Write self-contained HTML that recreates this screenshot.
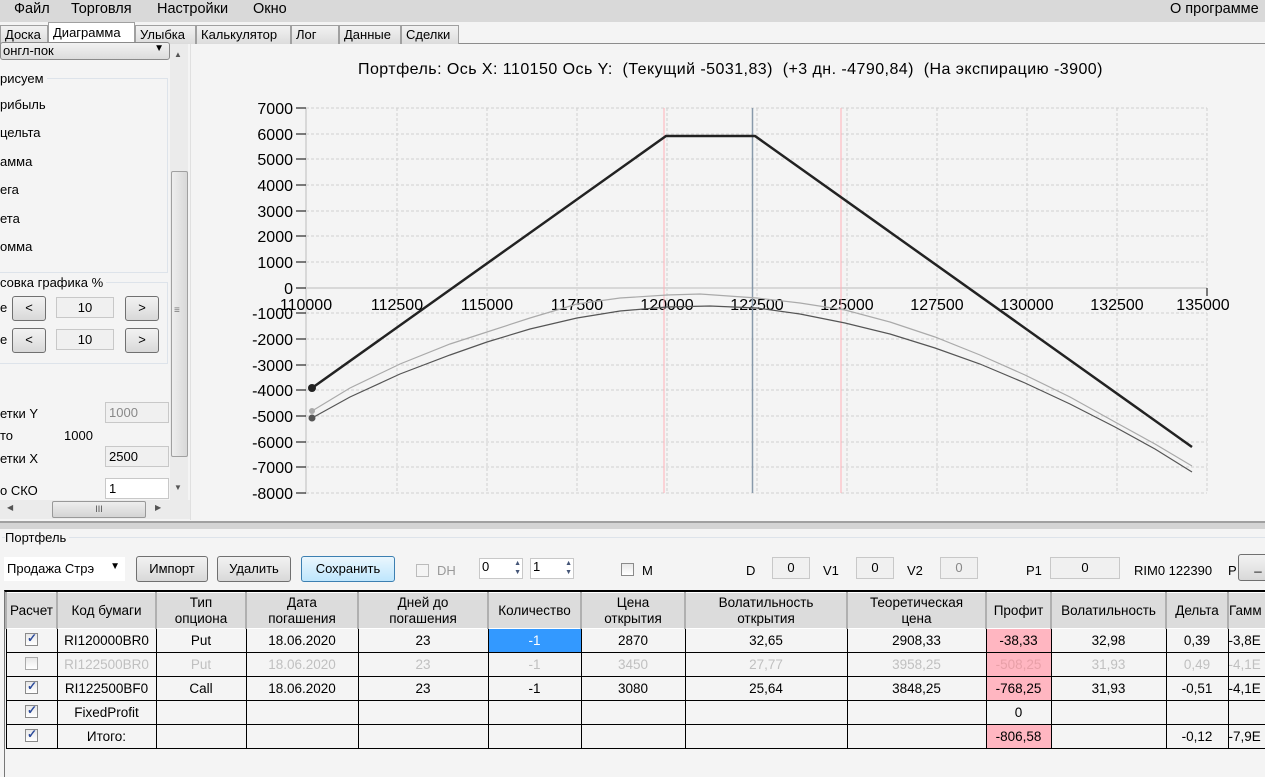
<!DOCTYPE html>
<html><head><meta charset="utf-8">
<style>
*{box-sizing:border-box;margin:0;padding:0}
body{width:1265px;height:777px;overflow:hidden;background:#f4f4f4;font-family:"Liberation Sans",sans-serif;font-size:13px;color:#000;position:relative}
.a{position:absolute;white-space:nowrap}
.menu{left:0;top:0;width:1265px;height:22px;background:#d9d9d9;font-size:14.5px}
.tab{position:absolute;top:25px;height:19px;border:1px solid #a0a0a0;border-bottom:none;background:linear-gradient(#f2f2f2,#dcdcdc);font-size:13px;padding:1px 0 0 4px}
.btn{position:absolute;border:1px solid #707070;border-radius:3px;background:linear-gradient(#f2f2f2,#e6e6e6 50%,#d8d8d8);text-align:center;font-size:13px}
.inp{position:absolute;border:1px solid #c8c8c8;background:#f0f0f0;text-align:center;font-size:13px}
.cb{position:absolute;width:13px;height:13px;border:1px solid #8a8a8a;background:linear-gradient(#e8e8e8,#fff)}
.cb.k::after{content:"✓";position:absolute;left:1px;top:-3px;font-size:12px;color:#2b4a9a;font-weight:bold}
table{border-collapse:collapse;position:absolute;left:5px;top:592px;table-layout:fixed;width:1282px}
td{border:1.5px solid #000;text-align:center;font-size:13.5px;height:24px;overflow:hidden;white-space:nowrap;padding:0}
tr.h td{background:#dcdcdc;height:36px;border-color:#fff #b0b0b0;border-width:1px 2px;line-height:16px}
tr.g td{color:#c0c0c0}
.pk{background:#ffb6c1}
</style></head><body>
<div class="a menu">
<span class="a" style="left:14px;top:1px">Файл</span>
<span class="a" style="left:71px;top:1px">Торговля</span>
<span class="a" style="left:157px;top:1px">Настройки</span>
<span class="a" style="left:253px;top:1px">Окно</span>
<span class="a" style="left:1170px;top:1px">О программе</span>
</div>
<div class="a" style="left:0;top:43px;width:1265px;height:1px;background:#8c8c8c"></div>
<div class="tab" style="left:0;width:48px">Доска</div>
<div class="tab" style="left:48px;top:22px;height:23px;width:87px;background:#fff;padding-top:2px">Диаграмма</div>
<div class="tab" style="left:135px;width:61px">Улыбка</div>
<div class="tab" style="left:196px;width:95px">Калькулятор</div>
<div class="tab" style="left:291px;width:48px">Лог</div>
<div class="tab" style="left:339px;width:62px">Данные</div>
<div class="tab" style="left:401px;width:58px">Сделки</div>

<!-- left panel -->
<div class="a" style="left:0;top:42px;width:170px;height:18px;border:1px solid #8a8a8a;border-radius:3px;background:linear-gradient(#f2f2f2,#dcdcdc);font-size:13px;padding-left:2px">онгл-пок<span style="position:absolute;right:5px;top:0;font-size:10px">▼</span></div>
<div class="a" style="left:0;top:78px;width:168px;height:195px;border-top:1px solid #dde3ea;border-right:1px solid #dde3ea;border-bottom:1px solid #dde3ea"></div>
<span class="a" style="left:0;top:71px;background:#f4f4f4;padding-right:3px">рисуем</span>
<span class="a" style="left:0;top:97px">рибыль</span>
<span class="a" style="left:0;top:125px">цельта</span>
<span class="a" style="left:0;top:154px">амма</span>
<span class="a" style="left:0;top:182px">ега</span>
<span class="a" style="left:0;top:211px">ета</span>
<span class="a" style="left:0;top:239px">омма</span>
<div class="a" style="left:0;top:282px;width:168px;height:82px;border:1px solid #dde3ea;border-left:none"></div>
<span class="a" style="left:0;top:275px;background:#f4f4f4;padding-right:3px">совка графика %</span>
<span class="a" style="left:0;top:300px">е</span>
<div class="btn" style="left:12px;top:296px;width:34px;height:25px;line-height:22px">&lt;</div>
<div class="inp" style="left:56px;top:297px;width:58px;height:21px;line-height:19px">10</div>
<div class="btn" style="left:125px;top:296px;width:34px;height:25px;line-height:22px">&gt;</div>
<span class="a" style="left:0;top:332px">е</span>
<div class="btn" style="left:12px;top:328px;width:34px;height:25px;line-height:22px">&lt;</div>
<div class="inp" style="left:56px;top:329px;width:58px;height:21px;line-height:19px">10</div>
<div class="btn" style="left:125px;top:328px;width:34px;height:25px;line-height:22px">&gt;</div>
<span class="a" style="left:0;top:406px">етки Y</span>
<div class="inp" style="left:105px;top:402px;width:64px;height:21px;text-align:left;padding-left:3px;color:#888;line-height:19px">1000</div>
<span class="a" style="left:0;top:428px">то</span>
<span class="a" style="left:64px;top:428px">1000</span>
<span class="a" style="left:0;top:451px">етки X</span>
<div class="inp" style="left:105px;top:446px;width:64px;height:21px;text-align:left;padding-left:3px;line-height:19px">2500</div>
<span class="a" style="left:0;top:483px">о СКО</span>
<div class="inp" style="left:105px;top:478px;width:64px;height:21px;background:#fff;text-align:left;padding-left:3px;line-height:19px">1</div>
<!-- v scrollbar -->
<div class="a" style="left:170px;top:44px;width:18px;height:456px;background:#ebebeb"></div>
<span class="a" style="left:174px;top:50px;font-size:8px;color:#555">▲</span>
<div class="a" style="left:171px;top:171px;width:17px;height:286px;border:1px solid #a0a0a0;border-radius:2px;background:linear-gradient(90deg,#eee,#d8d8d8)"></div>
<span class="a" style="left:174px;top:305px;font-size:10px;color:#777">≡</span>
<span class="a" style="left:174px;top:483px;font-size:8px;color:#555">▼</span>
<div class="a" style="left:0;top:500px;width:190px;height:19px;background:#ebebeb"></div>
<span class="a" style="left:7px;top:503px;font-size:8px;color:#555">◀</span>
<div class="a" style="left:52px;top:501px;width:94px;height:17px;border:1px solid #999;border-radius:2px;background:linear-gradient(#eee,#d4d4d4);text-align:center;font-size:9px;color:#555;line-height:15px">III</div>
<span class="a" style="left:155px;top:503px;font-size:8px;color:#555">▶</span>
<div class="a" style="left:190px;top:44px;width:1px;height:476px;background:#e0e0e0"></div>

<!-- chart -->
<div class="a" style="left:358px;top:61px;font-size:16px;letter-spacing:0.45px">Портфель: Ось X: 110150 Ось Y:&nbsp; (Текущий -5031,83)&nbsp; (+3 дн. -4790,84)&nbsp; (На экспирацию -3900)</div>
<svg class="a" style="left:0;top:0" width="1265" height="520" font-family="Liberation Sans, sans-serif" font-size="16">
<g stroke="#d0d0d0" stroke-dasharray="3,2" stroke-width="1">
<line x1="306" y1="108" x2="1207" y2="108"/><line x1="306" y1="134" x2="1207" y2="134"/><line x1="306" y1="159" x2="1207" y2="159"/><line x1="306" y1="185" x2="1207" y2="185"/><line x1="306" y1="211" x2="1207" y2="211"/><line x1="306" y1="236" x2="1207" y2="236"/><line x1="306" y1="262" x2="1207" y2="262"/><line x1="306" y1="313" x2="1207" y2="313"/><line x1="306" y1="339" x2="1207" y2="339"/><line x1="306" y1="365" x2="1207" y2="365"/><line x1="306" y1="390" x2="1207" y2="390"/><line x1="306" y1="416" x2="1207" y2="416"/><line x1="306" y1="442" x2="1207" y2="442"/><line x1="306" y1="467" x2="1207" y2="467"/><line x1="306" y1="493" x2="1207" y2="493"/>
<line x1="397" y1="108" x2="397" y2="493"/><line x1="487" y1="108" x2="487" y2="493"/><line x1="577" y1="108" x2="577" y2="493"/><line x1="667" y1="108" x2="667" y2="493"/><line x1="757" y1="108" x2="757" y2="493"/><line x1="847" y1="108" x2="847" y2="493"/><line x1="937" y1="108" x2="937" y2="493"/><line x1="1027" y1="108" x2="1027" y2="493"/><line x1="1117" y1="108" x2="1117" y2="493"/><line x1="1207" y1="108" x2="1207" y2="493"/>
</g>
<line x1="306" y1="108" x2="306" y2="494" stroke="#d8d8d8" stroke-width="2"/>
<line x1="306" y1="288" x2="1207" y2="288" stroke="#d8d8d8" stroke-width="2"/>
<g stroke="#000" stroke-width="1">
<line x1="296" y1="108" x2="306" y2="108"/><line x1="296" y1="134" x2="306" y2="134"/><line x1="296" y1="159" x2="306" y2="159"/><line x1="296" y1="185" x2="306" y2="185"/><line x1="296" y1="211" x2="306" y2="211"/><line x1="296" y1="236" x2="306" y2="236"/><line x1="296" y1="262" x2="306" y2="262"/><line x1="296" y1="288" x2="306" y2="288"/><line x1="296" y1="313" x2="306" y2="313"/><line x1="296" y1="339" x2="306" y2="339"/><line x1="296" y1="365" x2="306" y2="365"/><line x1="296" y1="390" x2="306" y2="390"/><line x1="296" y1="416" x2="306" y2="416"/><line x1="296" y1="442" x2="306" y2="442"/><line x1="296" y1="467" x2="306" y2="467"/><line x1="296" y1="493" x2="306" y2="493"/>
<line x1="1207" y1="288" x2="1207" y2="296"/>
</g>
<g text-anchor="end">
<text x="293" y="114">7000</text><text x="293" y="140">6000</text><text x="293" y="165">5000</text><text x="293" y="191">4000</text><text x="293" y="217">3000</text><text x="293" y="242">2000</text><text x="293" y="268">1000</text><text x="293" y="294">0</text><text x="293" y="319">-1000</text><text x="293" y="345">-2000</text><text x="293" y="371">-3000</text><text x="293" y="396">-4000</text><text x="293" y="422">-5000</text><text x="293" y="448">-6000</text><text x="293" y="473">-7000</text><text x="293" y="499">-8000</text>
</g>
<g text-anchor="middle">
<text x="306" y="310">110000</text><text x="397" y="310">112500</text><text x="487" y="310">115000</text><text x="577" y="310">117500</text><text x="667" y="310">120000</text><text x="757" y="310">122500</text><text x="847" y="310">125000</text><text x="937" y="310">127500</text><text x="1027" y="310">130000</text><text x="1117" y="310">132500</text><text x="1203" y="310">135000</text>
</g>
<line x1="664" y1="108" x2="664" y2="493" stroke="#ffb0b8"/>
<line x1="841" y1="108" x2="841" y2="493" stroke="#ffb0b8"/>
<line x1="752.5" y1="108" x2="752.5" y2="493" stroke="#8899aa" stroke-width="1.5"/>
<polyline fill="none" stroke="#aaa" stroke-width="1.2" points="312,411 350,388 400,364 450,344 487,332 530,318 577,304 620,298 667,295 700,294 757,298 800,303 845,310 890,322 935,337 980,355 1025,375 1070,397 1115,422 1155,444 1192,466"/>
<polyline fill="none" stroke="#555" stroke-width="1.2" points="312,418 350,397 400,374 450,355 487,342 530,329 577,318 620,311 667,307 710,306 757,308 800,314 845,323 890,334 935,348 980,364 1025,383 1070,404 1115,427 1155,449 1192,472"/>
<polyline fill="none" stroke="#222" stroke-width="2.5" points="312,388 666,136 755,136 1192,447"/>
<circle cx="312" cy="388" r="4" fill="#222"/>
<circle cx="312" cy="411" r="3" fill="#aaa"/>
<circle cx="312" cy="418" r="3.5" fill="#555"/>
</svg>

<!-- splitter -->
<div class="a" style="left:0;top:521px;width:1265px;height:2px;background:#a0a0a0"></div>
<div class="a" style="left:0;top:523px;width:1265px;height:6px;background:#d4d4d4"></div>

<!-- bottom -->
<div class="a" style="left:2px;top:537px;width:1263px;height:1px;background:#dde3ea"></div>
<span class="a" style="left:5px;top:530px;background:#f4f4f4;padding-right:3px">Портфель</span>
<div class="a" style="left:4px;top:557px;width:121px;height:24px;background:#fff;padding:4px 0 0 3px">Продажа Стрэ<span style="position:absolute;right:5px;top:4px;font-size:10px">▼</span></div>
<div class="btn" style="left:136px;top:556px;width:72px;height:26px;line-height:24px">Импорт</div>
<div class="btn" style="left:217px;top:556px;width:74px;height:26px;line-height:24px">Удалить</div>
<div class="btn" style="left:301px;top:556px;width:94px;height:26px;line-height:24px;border-color:#3c7fb1;background:linear-gradient(#eaf6fd,#bee6fd)">Сохранить</div>
<div class="cb" style="left:416px;top:564px;border-color:#bbb;background:#f4f4f4"></div>
<span class="a" style="left:437px;top:563px;color:#999">DH</span>
<div class="inp" style="left:479px;top:558px;width:44px;height:21px;background:#fff;text-align:left;padding-left:2px">0<span style="position:absolute;right:1px;top:0;font-size:7px;line-height:9px;color:#457">▲<br>▼</span></div>
<div class="inp" style="left:530px;top:558px;width:44px;height:21px;background:#fff;text-align:left;padding-left:2px">1<span style="position:absolute;right:1px;top:0;font-size:7px;line-height:9px;color:#457">▲<br>▼</span></div>
<div class="cb" style="left:621px;top:563px"></div>
<span class="a" style="left:642px;top:563px">M</span>
<span class="a" style="left:746px;top:563px">D</span>
<div class="inp" style="left:772px;top:557px;width:38px;height:22px;line-height:20px">0</div>
<span class="a" style="left:823px;top:563px">V1</span>
<div class="inp" style="left:856px;top:557px;width:38px;height:22px;line-height:20px">0</div>
<span class="a" style="left:907px;top:563px">V2</span>
<div class="inp" style="left:940px;top:557px;width:38px;height:22px;line-height:20px;color:#888">0</div>
<span class="a" style="left:1026px;top:563px">P1</span>
<div class="inp" style="left:1050px;top:557px;width:70px;height:22px;line-height:20px">0</div>
<span class="a" style="left:1134px;top:563px">RIM0 122390</span>
<span class="a" style="left:1228px;top:563px">P</span>
<div class="btn" style="left:1238px;top:554px;width:40px;height:27px;line-height:22px">_</div>
<div class="a" style="left:4px;top:590px;width:1261px;height:187px;border-left:1px solid #777;border-top:2px solid #000"></div>

<table>
<colgroup><col style="width:51px"><col style="width:99px"><col style="width:90px"><col style="width:112px"><col style="width:130px"><col style="width:93px"><col style="width:104px"><col style="width:162px"><col style="width:139px"><col style="width:65px"><col style="width:115px"><col style="width:62px"><col style="width:60px"></colgroup>
<tr class="h"><td>Расчет</td><td>Код бумаги</td><td>Тип<br>опциона</td><td>Дата<br>погашения</td><td>Дней до<br>погашения</td><td>Количество</td><td>Цена<br>открытия</td><td>Волатильность<br>открытия</td><td>Теоретическая<br>цена</td><td>Профит</td><td>Волатильность</td><td>Дельта</td><td style="text-align:left">Гамм</td></tr>
<tr><td><span class="cb k" style="position:relative;display:inline-block"></span></td><td>RI120000BR0</td><td>Put</td><td>18.06.2020</td><td>23</td><td style="background:#3399ff;color:#fff">-1</td><td>2870</td><td>32,65</td><td>2908,33</td><td class="pk">-38,33</td><td>32,98</td><td>0,39</td><td style="text-align:left">-3,8E</td></tr>
<tr class="g"><td><span class="cb" style="position:relative;display:inline-block;border-color:#aaa"></span></td><td>RI122500BR0</td><td>Put</td><td>18.06.2020</td><td>23</td><td>-1</td><td>3450</td><td>27,77</td><td>3958,25</td><td class="pk" style="color:#e8a0a8">-508,25</td><td>31,93</td><td>0,49</td><td style="text-align:left">-4,1E</td></tr>
<tr><td><span class="cb k" style="position:relative;display:inline-block"></span></td><td>RI122500BF0</td><td>Call</td><td>18.06.2020</td><td>23</td><td>-1</td><td>3080</td><td>25,64</td><td>3848,25</td><td class="pk">-768,25</td><td>31,93</td><td>-0,51</td><td style="text-align:left">-4,1E</td></tr>
<tr><td><span class="cb k" style="position:relative;display:inline-block"></span></td><td>FixedProfit</td><td></td><td></td><td></td><td></td><td></td><td></td><td></td><td>0</td><td></td><td></td><td></td></tr>
<tr><td><span class="cb k" style="position:relative;display:inline-block"></span></td><td>Итого:</td><td></td><td></td><td></td><td></td><td></td><td></td><td></td><td class="pk">-806,58</td><td></td><td>-0,12</td><td style="text-align:left">-7,9E</td></tr>
</table>
</body></html>
